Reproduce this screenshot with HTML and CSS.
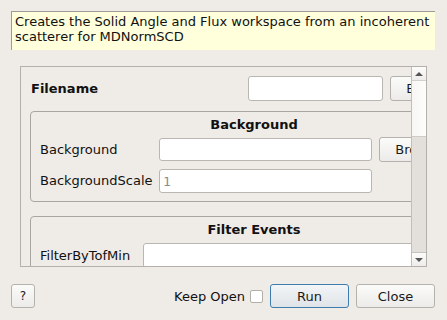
FILE: index.html
```html
<!DOCTYPE html>
<html>
<head>
<meta charset="utf-8">
<link rel="stylesheet" href="styles.css">
</head>
<body>
<div class="dialog">
  <div class="desc">Creates the Solid Angle and Flux workspace from an incoherent scatterer for MDNormSCD</div>

  <div class="scrollarea">
    <div class="viewport">
      <div class="content">
        <div class="file-row">
          <span class="lbl bold">Filename</span>
          <div class="field w-file"></div>
          <div class="btn w-browse">Browse</div>
        </div>

        <div class="group">
          <div class="group-title">Background</div>
          <div class="grow bg-row">
            <span class="lbl">Background</span>
            <div class="field w-bg"></div>
            <div class="btn w-browse">Browse</div>
          </div>
          <div class="grow bg-row row2">
            <span class="lbl">BackgroundScale</span>
            <div class="field w-bg short"><span class="ph">1</span></div>
          </div>
        </div>

        <div class="group group2">
          <div class="group-title">Filter Events</div>
          <div class="grow filter-row">
            <span class="lbl">FilterByTofMin</span>
            <div class="field w-filter"></div>
          </div>
        </div>
      </div>
    </div>
    <div class="scrollbar">
      <div class="sb-arrow"><span class="tri up"></span></div>
      <div class="sb-track"><div class="sb-handle"></div></div>
      <div class="sb-arrow"><span class="tri down"></span></div>
    </div>
  </div>

  <div class="footer">
    <div class="btn help">?</div>
    <div class="spacer"></div>
    <span class="keep">Keep Open</span>
    <span class="check"></span>
    <div class="btn action default">Run</div>
    <div class="btn action">Close</div>
  </div>
</div>
</body>
</html>
```

FILE: styles.css
```css
html, body {
  margin: 0;
  padding: 0;
  background: #efebe7;
}
body {
  width: 447px;
  height: 320px;
  overflow: hidden;
  font-family: "DejaVu Sans", "Liberation Sans", sans-serif;
  font-size: 13px;
  color: #111;
}
.dialog {
  padding: 11px 12px 0 11px;
}
.desc {
  box-sizing: border-box;
  width: 424px;
  height: 39px;
  background: #ffffdc;
  border-top: 1px solid #9d9b98;
  border-left: 1px solid #9d9b98;
  padding: 2px 3px 0 3px;
  line-height: 15px;
}
.scrollarea {
  box-sizing: border-box;
  margin: 16px 0 0 9px;
  width: 407px;
  height: 201px;
  border: 1px solid #b4b0ac;
  display: flex;
}
.viewport {
  flex: 1;
  overflow: hidden;
  position: relative;
}
.content {
  width: 480px;
  padding: 9px 0 0 9px;
}
.lbl {
  white-space: nowrap;
  line-height: 16px;
}
.bold {
  font-weight: bold;
}
.file-row {
  display: grid;
  grid-template-columns: 211px 135px 80px;
  column-gap: 7px;
  align-items: center;
  height: 25px;
}
.file-row .lbl {
  padding-left: 1px;
}
.field {
  box-sizing: border-box;
  height: 25px;
  background: #fff;
  border: 1px solid #bab6b2;
  border-radius: 3px;
  padding: 0 3px;
  display: flex;
  align-items: center;
}
.ph {
  color: #8c8c8c;
  font-family: "DejaVu Sans Mono", monospace;
  font-size: 13px;
}
.btn {
  box-sizing: border-box;
  height: 25px;
  border: 1px solid #b5b1ad;
  border-radius: 3px;
  background: linear-gradient(#fbfbfa, #ecebe9);
  display: flex;
  align-items: center;
  justify-content: center;
  white-space: nowrap;
  overflow: hidden;
  color: #1a1a1a;
}
.w-browse {
  width: 80px;
}
.group {
  box-sizing: border-box;
  width: 448px;
  margin-top: 10px;
  border: 1px solid #a9a5a1;
  border-radius: 4px;
  padding: 0 9px 8px 9px;
}
.group2 {
  margin-top: 14px;
}
.group-title {
  font-weight: bold;
  text-align: center;
  padding: 4px 0 4px;
  line-height: 17px;
}
.grow {
  display: grid;
  align-items: center;
  height: 25px;
}
.bg-row {
  grid-template-columns: 119px 213px 80px;
}
.bg-row .btn {
  margin-left: 7px;
}
.bg-row .field {
  height: 23px;
}
.row2 {
  margin-top: 7px;
  height: 24px;
}
.row2 .field {
  height: 24px;
}
.filter-row {
  grid-template-columns: 103px 320px;
  margin-top: 1px;
}
.filter-row .field {
  height: 25px;
}
.scrollbar {
  width: 14px;
  border-left: 1px solid #c2beba;
  display: flex;
  flex-direction: column;
  background: #e3e0dc;
}
.sb-arrow {
  height: 13px;
  background: linear-gradient(#fcfcfb, #efedeb);
  display: flex;
  align-items: center;
  justify-content: center;
}
.sb-arrow:first-child {
  border-bottom: 1px solid #d3cfcb;
}
.sb-arrow:last-child {
  border-top: 1px solid #c6c2be;
}
.tri {
  width: 0;
  height: 0;
  border-left: 4px solid transparent;
  border-right: 4px solid transparent;
}
.tri.up {
  border-bottom: 4px solid #555;
}
.tri.down {
  border-top: 4px solid #555;
}
.sb-track {
  flex: 1;
  background: #e3e0dc;
}
.sb-handle {
  height: 55px;
  background: linear-gradient(90deg, #f7f6f5, #fdfdfc);
  border-bottom: 1px solid #cfcbc7;
}
.footer {
  display: flex;
  align-items: center;
  margin-top: 17px;
  height: 24px;
}
.help {
  width: 24px;
  height: 24px;
  font-size: 12px;
}
.spacer {
  flex: 1;
}
.keep {
  margin-right: 5px;
}
.check {
  box-sizing: border-box;
  width: 13px;
  height: 13px;
  background: #fff;
  border: 1px solid #b3afab;
  border-radius: 2px;
  margin-right: 7px;
}
.action {
  width: 79px;
  height: 24px;
}
.action + .action {
  margin-left: 7px;
}
.default {
  border-color: #3f7cae;
  background: linear-gradient(#f3f5f7, #dfe4e8);
}
```
